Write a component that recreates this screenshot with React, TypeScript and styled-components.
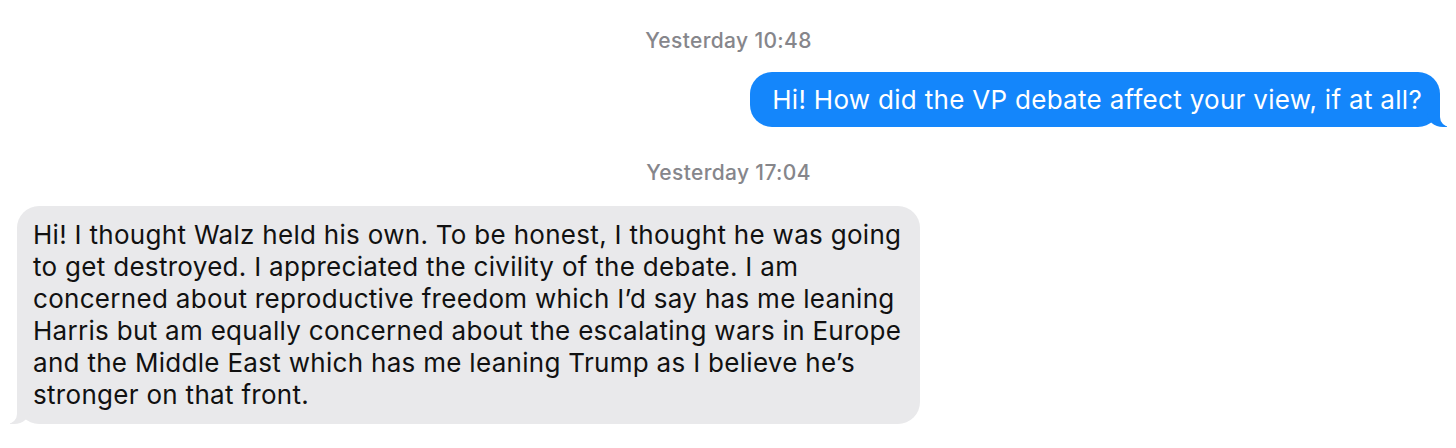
import React from "react";
import styled, { createGlobalStyle } from "styled-components";

const Global = createGlobalStyle`
  html, body { margin: 0; padding: 0; background: #ffffff; }
  body { font-family: Inter, "Noto Sans", "Liberation Sans", sans-serif; -webkit-font-smoothing: antialiased; }
`;

const Thread = styled.div`
  width: 1456px;
  height: 448px;
  box-sizing: border-box;
  padding: 29px 16px 0 17px;
  display: flex;
  flex-direction: column;
  overflow: hidden;
`;

const Stamp = styled.div<{ $gap: number }>`
  align-self: center;
  font-size: 21px;
  line-height: 24px;
  letter-spacing: 0.35px;
  color: #86868b;
  font-weight: 500;
  margin-bottom: ${(p) => p.$gap}px;
`;

const Bubble = styled.div<{ $me?: boolean }>`
  position: relative;
  box-sizing: border-box;
  font-size: 26px;
  line-height: 32px;
  letter-spacing: 0.3px;
  border-radius: 22px;
  padding: ${(p) => (p.$me ? "12px 18px 11px 22px" : "13px 18px 13px 16px")};
  align-self: ${(p) => (p.$me ? "flex-end" : "flex-start")};
  background: ${(p) => (p.$me ? "#1486fb" : "#e9e9eb")};
  color: ${(p) => (p.$me ? "#ffffff" : "#111111")};
  max-width: ${(p) => (p.$me ? "none" : "903px")};
  margin-bottom: ${(p) => (p.$me ? "34px" : "0")};

  &::before,
  &::after {
    content: "";
    position: absolute;
    bottom: 0;
    height: 25px;
  }
  &::before {
    width: 20px;
    background: ${(p) => (p.$me ? "#1486fb" : "#e9e9eb")};
    ${(p) =>
      p.$me
        ? "right: -7px; border-bottom-left-radius: 16px 14px;"
        : "left: -7px; border-bottom-right-radius: 16px 14px;"}
  }
  &::after {
    width: 26px;
    background: #ffffff;
    ${(p) =>
      p.$me
        ? "right: -26px; border-bottom-left-radius: 10px;"
        : "left: -26px; border-bottom-right-radius: 10px;"}
  }
`;

export default function App() {
  return (
    <>
      <Global />
      <Thread>
        <Stamp $gap={19}>Yesterday 10:48</Stamp>
        <Bubble $me>Hi! How did the VP debate affect your view, if at all?</Bubble>
        <Stamp $gap={21}>Yesterday 17:04</Stamp>
        <Bubble>
          Hi! I thought Walz held his own. To be honest, I thought he was going to get
          destroyed. I appreciated the civility of the debate. I am concerned about
          reproductive freedom which I’d say has me leaning Harris but am equally
          concerned about the escalating wars in Europe and the Middle East which has me
          leaning Trump as I believe he’s stronger on that front.
        </Bubble>
      </Thread>
    </>
  );
}
